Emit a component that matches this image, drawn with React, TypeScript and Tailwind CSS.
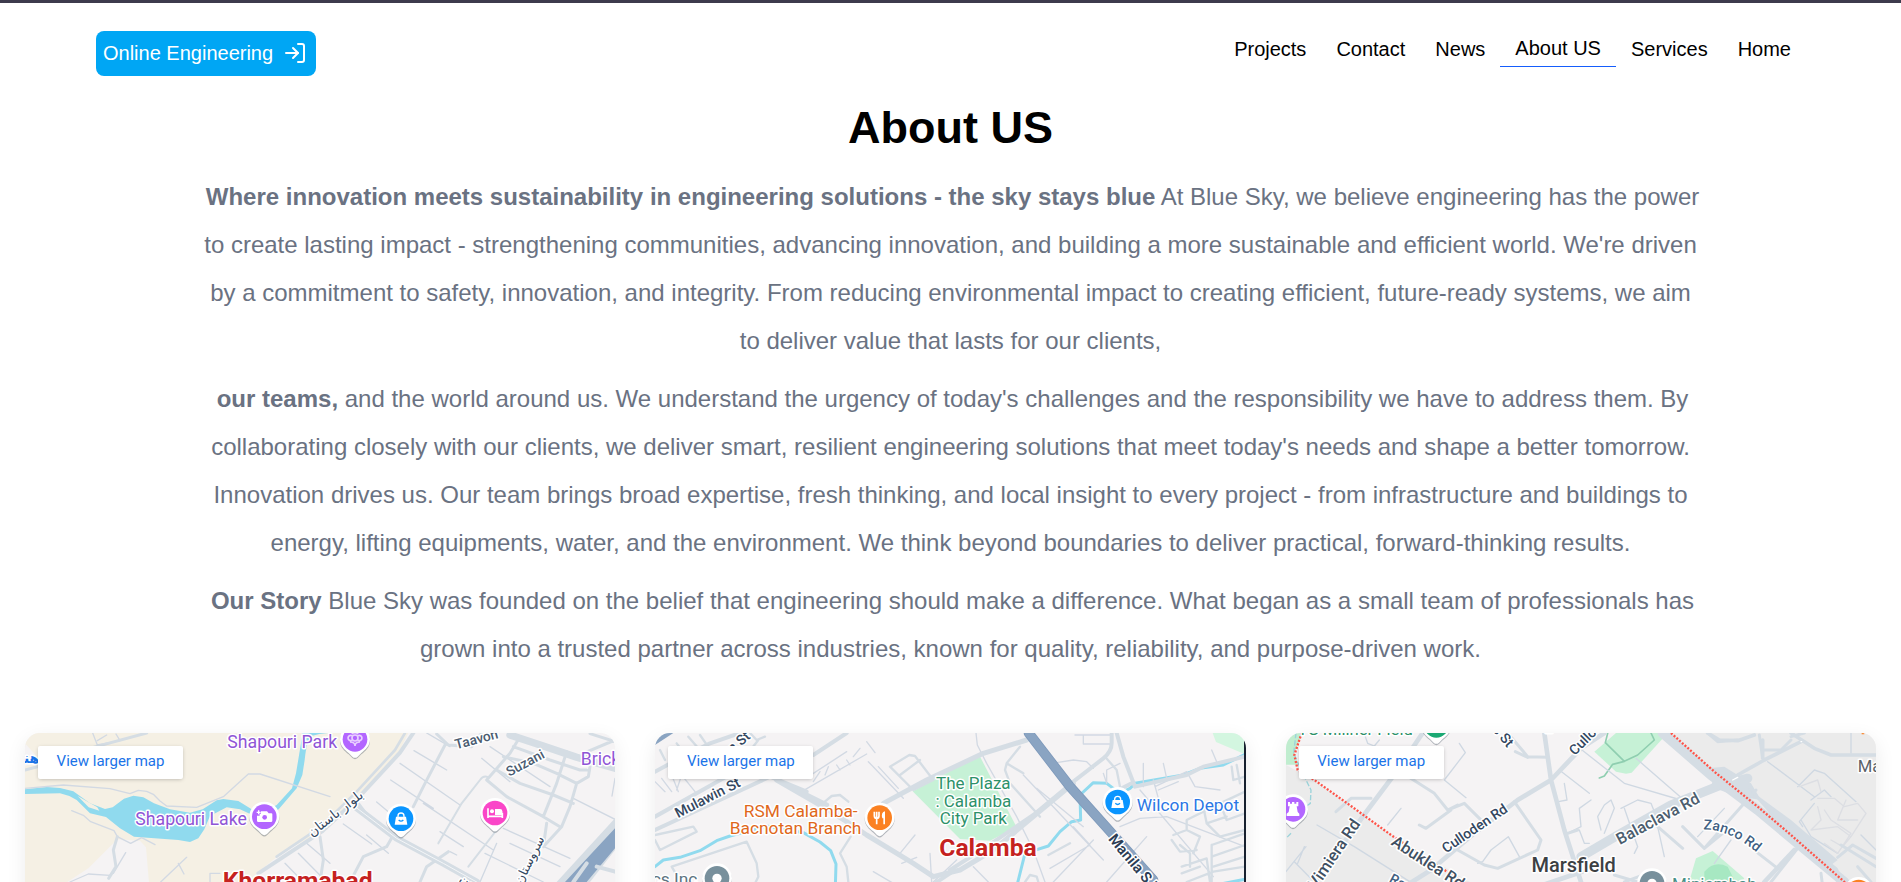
import type { ReactNode } from "react";
import { LogIn } from "lucide-react";

const navItems = ["Projects", "Contact", "News", "About US", "Services", "Home"];
const activeItem = "About US";

type RoadsProps = { d: string; w: number; c?: string; dash?: string };

function Roads({ d, w, c = "#d5dde4", dash }: RoadsProps) {
  return (
    <path
      d={d}
      fill="none"
      stroke={c}
      strokeWidth={w}
      strokeLinecap={dash ? "butt" : "round"}
      strokeLinejoin="round"
      strokeDasharray={dash}
    />
  );
}

type LabelProps = {
  x: number;
  y: number;
  size: number;
  color: string;
  angle?: number;
  weight?: number;
  anchor?: "start" | "middle" | "end";
  family?: string;
  children: ReactNode;
};

function Label({ x, y, size, color, angle = 0, weight = 400, anchor = "middle", family = "Roboto, sans-serif", children }: LabelProps) {
  return (
    <text
      transform={`translate(${x} ${y}) rotate(${angle})`}
      fontFamily={family}
      fontSize={size}
      fontWeight={weight}
      textAnchor={anchor}
      fill={color}
      stroke="#ffffff"
      strokeWidth={9}
      strokeLinejoin="round"
      paintOrder="stroke"
    >
      {children}
    </text>
  );
}

const glyphs = {
  camera: (
    <>
      <path d="M-10-16h18l5 6h8q3 0 3 3v19q0 4-4 4h-38q-4 0-4-4v-15h8v-6h4z" fill="#fff" />
      <circle cx="1" cy="2" r="7" fill="#b366ff" />
      <path d="M-17-19v12M-23-13h12" stroke="#fff" strokeWidth="4" />
    </>
  ),
  flower: (
    <g fill="none" stroke="#e9d0ff" strokeWidth="5">
      <circle cy="-4" r="9" />
      <path d="M-9-11a8 8 0 1 0 0 14M9-11a8 8 0 1 1 0 14M-15 8q15 0 15 12q0-12 15-12M-10-17q10-6 20 0" />
    </g>
  ),
  bag: (
    <>
      <path d="M-15-6h30l4 24h-38z" fill="#fff" />
      <path d="M-9-4v-4a9 9 0 0 1 18 0v4" fill="none" stroke="#fff" strokeWidth="4" />
      <path d="M-7 4q7 7 14 0" fill="none" stroke="#0a95ff" strokeWidth="4" />
    </>
  ),
  bed: (
    <>
      <path d="M-21-14v29M-21 10h43M22 15v-16" stroke="#fff" strokeWidth="5" />
      <circle cx="-9" cy="-5" r="6" fill="#fff" />
      <path d="M0-12h15q7 0 7 7v11H0z" fill="#fff" />
    </>
  ),
  food: (
    <>
      <path d="M-16-18v12q0 8 7 8t7-8v-12M-9-18V20" fill="none" stroke="#fff" strokeWidth="5" />
      <path d="M8 2q-5-18 8-21v39h-5V2z" fill="#fff" />
    </>
  ),
  dot: <circle r="14" fill="#fff" />,
  rook: (
    <path d="M-15-22h6v5h6v-5h7v5h6v-5h6v13h-5l3 17 5 5v7h-38v-7l6-5 3-17h-5z" fill="#fff" />
  ),
};

function Pin({ x, y, color, glyph }: { x: number; y: number; color: string; glyph: keyof typeof glyphs }) {
  const outline = "M-45 0a45 45 0 1 1 90 0c0 20-14 31-26 41l-11 11q-8 7-16 0l-11-11c-12-10-26-21-26-41z";
  return (
    <g transform={`translate(${x} ${y})`}>
      <path d={outline} transform="translate(0 4)" fill="#5f6b76" opacity="0.45" />
      <path d={outline} fill="#fff" />
      <circle r="37" fill={color} />
      {glyphs[glyph]}
    </g>
  );
}

function KhorramabadMap() {
  return (
    <>
      <path d="M45 39H1195L1170 90 1055 215 935 335 820 395 740 460 690 520 690 1400H45z" fill="#f5f0e4" />
      <path d="M150 500 235 445 322 358 390 362 408 382 418 500V1400H45V560z" fill="#f5f3f4" />
      <path d="M45 70 85 115 45 140z" fill="#f5f3f4" />
      <path
        d="M45 208 110 201 150 204 190 214 240 250 285 267 308 262 342 236 370 227 400 232 432 250 480 268 540 278 578 268 620 241 640 237 685 243 725 268 760 275 800 255 846 205 858 160 868 100 878 39H995Q940 36 905 48 890 60 884 120L877 165 860 205 806 268 760 300 690 268 650 262 600 288 583 328 565 355 540 366 505 360 372 350 330 325 288 291 240 280 200 240 178 228 150 220 45 222z"
        fill="#90daee"
      />
      <path d="M203 228 262 262 268 272 236 262z" fill="#f5f0e4" />
      <Roads w={4} c="#d2d9e3" d="M45 205 160 195 300 206 360 221 385 211 410 214 430 223 450 243 470 258 560 262 640 230 715 162H750L960 230M185 272 220 286 242 305 312 332 322 350 362 370 395 353 435 374M452 486 530 412M505 430 522 462M347 398 310 460M180 486 235 462 300 466M600 486V460H630M248 39 262 75 330 62 318 42M262 62 290 45" />
      <Roads w={9} d="M322 350 310 390 318 440 296 475M250 82 410 39M45 150 90 138" />
      <Roads w={4} c="#d0d8e2" d="M890 370 960 430M865 400 950 486M825 430 880 486M1000 312 1085 372M1070 345 1135 400M1142 180 1270 265M1170 130 1350 255M1212 92 1310 150M1100 246 1160 296M1240 250 1450 390M1250 39 1320 80M1440 80 1620 200M1415 115 1500 185M1480 325 1680 415M1500 370 1650 440M1425 400 1600 486M1690 235 1815 298M1815 175 1806 228M1290 335 1360 380M1320 395 1340 405M1410 486 1460 370" />
      <Roads w={9} d="M1305 75 1245 190 1210 260M1415 39 1385 80 1315 75 1280 42M1530 50 1500 100 1430 180 1490 230 1600 290 1650 320M1480 110 1570 130 1640 160 1700 190M1460 150 1530 190 1630 225 1690 250M1670 95 1640 190 1600 290M1740 140 1735 170 1700 190 1680 260 1655 320M1510 80 1620 120 1710 150 1730 150M1720 100 1815 60M1730 110 1815 150M1740 41 1815 65M1655 320 1600 380 1610 310M1045 250 1075 290M930 350 940 420 930 486M1020 486 1060 410 1130 380 1150 345M1230 486 1250 440 1315 395" />
      <Roads w={6} d="M1285 370 1355 250 1410 180Q1420 165 1435 172M1375 440 1460 330" />
      <Roads w={22} d="M1500 45 1600 78 1700 112 1815 145" />
      <Roads w={12} d="M1210 39 1170 98 1050 228 935 335 745 460" />
      <Roads w={8} d="M1185 39 1155 90 1040 215 930 322 800 410" />
      <Roads w={20} d="M1035 260 1160 355 1300 430 1400 486" />
      <Roads w={3} c="#f4f6f8" d="M1035 260 1160 355 1300 430 1400 486" />
      <path d="M1815 295 1640 486H1740L1815 390z" fill="#d5dde4" />
      <path d="M1815 325 1665 486 1500 700H1600L1730 486 1815 385z" fill="#8aa4c2" />
      <Roads w={12} d="M1760 440 1815 455M1730 430 1690 486" />
      <Label x={88} y={128} size={42} color="#1a73e8" weight={700} anchor="end" family="'DejaVu Sans', sans-serif">هنر</Label>
      <Label x={652} y={84} size={53} color="#8f55d6" anchor="start">Shapouri Park</Label>
      <Pin x={1035} y={58} color="#b366ff" glyph="flower" />
      <Label x={376} y={316} size={53} color="#8f55d6" anchor="start">Shapouri Lake</Label>
      <Pin x={763} y={290} color="#b366ff" glyph="camera" />
      <Pin x={1173} y={296} color="#0a95ff" glyph="bag" />
      <Pin x={1455} y={279} color="#fa46c8" glyph="bed" />
      <Label x={1403} y={71} size={41} angle={-15} color="#4a5b70" weight={500}>Taavon</Label>
      <Label x={1552} y={141} size={41} angle={-28} color="#4a5b70" weight={500}>Suzani</Label>
      <Label x={1712} y={135} size={53} color="#8f55d6" anchor="start">Brick</Label>
      <Label x={984} y={291} size={40} angle={-38} color="#33475f" family="'DejaVu Sans', sans-serif">بلوار باستان</Label>
      <Label x={1570} y={425} size={38} angle={-64} color="#33475f" family="'DejaVu Sans', sans-serif">سروستان</Label>
      <Label x={1364} y={492} size={40} angle={30} color="#33475f" family="'DejaVu Sans', sans-serif">بن</Label>
      <Label x={863} y={507} size={74} color="#c5221f" weight={700}>Khorramabad</Label>
    </>
  );
}

function CalambaMap() {
  return (
    <>
      <path d="M818 214 1018 106 1130 322 1050 362 960 357z" fill="#c6f1d6" />
      <path d="M1718 39H1815V103L1728 66z" fill="#d3f6e0" />
      <Roads w={9} c="#90daee" d="M45 440 70 420 120 412 180 392 230 362 270 348 380 318 490 338 540 366 572 392 588 432 586 500M1130 500 1155 400 1225 378 1260 335 1295 305 1322 300 1320 225 1360 188 1400 190 1440 220 1470 205 1485 190 1630 165 1680 145 1750 135 1815 103M1700 500 1815 478" />
      <Roads w={4} c="#d2d9e3" d="M685 125 790 235M715 140 775 205M490 212 680 102M680 65 705 98M505 170 620 95M540 155 520 185M565 140 555 165M590 135 600 150M620 120 630 135M660 85 640 110M45 185 75 215M65 175 95 215M95 165 115 215M110 210 125 165 165 215M1008 39 1012 75 1040 130 1130 290 1180 390 1215 486M1305 45H1330V72H1410M1410 45H1330M1250 128 1300 120 1340 125 1360 145M1150 165 1390 420M1190 205 1330 320M1400 486 1520 350M1230 445 1350 375 1300 320M1240 486 1360 360M1500 210 1720 470M1440 320 1500 295 1580 290 1815 380M1555 235 1540 180M1510 200 1510 130M1580 175 1570 130M1640 155 1545 200M1555 210 1615 185M1715 90 1730 125M1640 155 1665 200 1740 210M700 455 760 490M780 400 825 345M785 430 830 412M870 400 875 486M950 420 880 486M1000 440 1045 486M1390 160 1400 190 1400 150 1440 130" />
      <Roads w={7} d="M750 140 808 105 825 108 880 180 820 210 750 140M780 165 840 120M60 90 75 120M110 70 140 110M145 50 175 85M180 45 225 110M330 39 350 60 375 50M355 60 320 105M45 345 160 320 170 335 60 390 45 360M95 440 320 365 350 430 355 470 340 500M95 440 130 500M548 250 575 228 600 225 625 245M632 350 600 400 620 440 625 486M1150 160 1100 130 1095 150 1110 190 1200 290M1100 130 1140 80M1395 110 1430 150 1440 200M1155 486 1170 465 1190 470 1195 486M1225 405 1290 370M1600 345 1640 330 1680 350 1660 400M1595 360 1620 395 1670 390M1640 330 1640 300 1740 250 1815 215M1690 260 1700 310 1760 290M1740 250 1760 300 1815 280M1700 310 1740 350 1815 330M1715 375V440 486M1715 375 1815 340M1715 410 1815 375M1720 440 1815 410M1625 440 1700 415 1710 486M1625 460 1680 440M1775 140 1780 180 1815 170M1790 135 1800 190M1640 486 1720 455 1815 440M1620 375 1650 400 1650 440" />
      <Roads w={12} d="M45 290 330 130M45 330 390 170M520 105 620 39M45 155 110 120 210 70 300 39M390 170 500 215M1415 39V70Q1415 95 1390 115L1300 185 1180 285 1040 380 930 450" />
      <Roads w={15} d="M410 180 540 255 620 305 680 345 820 430 880 470 960 450 1060 390 1180 290 1300 190M730 250 860 180 1030 100 1160 60M480 215 560 255" />
      <Roads w={12} d="M1430 39 1450 110 1485 200 1640 165 1690 140 1815 110" />
      <Roads w={12} d="M1475 190 1435 210M930 460 870 500" />
      <path d="M45 39H100L45 75z" fill="#8aa4c2" />
      <Roads w={30} c="#7f9abb" d="M1166 39 1290 200 1420 345 1540 480" />
      <Roads w={25} c="#8aa4c2" d="M1166 39 1290 200 1420 345 1540 480" />
      <Label x={305} y={77} size={42} angle={-40} color="#33475f" weight={500}>n St</Label>
      <Label x={209} y={246} size={43} angle={-27} color="#33475f" weight={500}>Mulawin St</Label>
      <Label x={653} y={290} size={52} color="#e0681b" anchor="end">RSM Calamba-</Label>
      <Label x={664} y={343} size={52} color="#e0681b" anchor="end">Bacnotan Branch</Label>
      <Pin x={719} y={293} color="#fb8122" glyph="food" />
      <Label x={1000} y={208} size={51} color="#2d9169">The Plaza</Label>
      <Label x={1000} y={261} size={51} color="#2d9169">: Calamba</Label>
      <Label x={1000} y={313} size={51} color="#2d9169">City Park</Label>
      <Label x={1044} y={408} size={74} color="#c5221f" weight={700}>Calamba</Label>
      <Pin x={1433} y={246} color="#0a95ff" glyph="bag" />
      <Label x={1490} y={273} size={52} color="#2b77e5" anchor="start">Wilcon Depot</Label>
      <Label x={1403} y={358} size={45} angle={50} color="#2c3d55" weight={600} anchor="start">Manila S Rd</Label>
      <Label x={172} y={496} size={52} color="#5d7480" anchor="end">cs Inc</Label>
      <Pin x={231} y={475} color="#78909c" glyph="dot" />
      <rect x={1812} y={39} width={6} height={1400} fill="#17202e" />
    </>
  );
}

function MarsfieldMap() {
  return (
    <>
      <path d="M45 135 130 180 360 345 620 500V1400H45z" fill="#ebebeb" />
      <path d="M1190 39H1820V600L1740 500z" fill="#ebebeb" />
      <path d="M45 39H95L70 100 80 134H45z" fill="#c0edcf" />
      <path d="M1035 39H1190L1082 158 1065 161 1035 155 970 95z" fill="#c6f1d6" />
      <path d="M1250 500 1275 415 1325 393 1420 475 1400 500z" fill="#c6f1d6" />
      <path d="M1300 500V455Q1330 420 1370 440L1400 500z" fill="#a7e8c2" />
      <Roads w={5} c="#8fceb0" d="M1010 40 1003 68 1060 124 1100 105 1150 60 1140 39M1060 124 1025 133 1000 168 985 174" />
      <Roads w={4} c="#9bd3da" dash="16 6" d="M75 39 68 100 95 160 120 210 118 250 90 270M60 340 45 355" />
      <Roads w={4} c="#cfd8e2" d="M138 315 250 380 440 500M80 430 100 380M45 455 105 380M70 425 130 486M283 50 290 70 310 78 325 60M565 70 583 98 520 180 585 233M390 265 350 315M865 150 955 220M880 190 888 240 862 245M960 240 925 265 930 320 890 340M925 330 940 370 955 370M635 425 660 390 712 350 745 410M635 425 620 430M933 90 1060 190 1230 240M1095 115 1250 250M990 330 980 290 1000 255 1020 240 1030 265 1000 340M1050 265 1100 240 1140 250 1160 300M1060 265 1100 380 1090 400M1360 265 1280 350M1380 360 1330 430M1160 320 1180 410M1740 39V100M1490 125 1630 230M1580 200 1630 150 1660 160 1755 245M1590 300 1620 350 1700 400M1630 250 1585 305 1595 320M1770 345 1815 390M1620 240 1660 210 1680 230" />
      <Roads w={4} c="#dcdee3" d="M1640 235H1690M1690 235 1720 260 1760 250 1785 280 1740 350 1700 320 1620 330 1650 300 1640 260M1660 270 1680 300 1740 340 1700 400 1660 370M1725 240 1700 300 1760 300M1740 350 1715 380 1680 360M1585 200 1640 180 1650 215" />
      <Roads w={9} d="M412 170 490 220 530 270 580 250 635 305M530 270 560 255M445 315 465 325 540 270M730 245 810 360 800 390 680 445 640 435 560 390M195 275 240 235 300 235M710 39 770 110 830 112M733 95 770 112M1235 320 1300 385 1455 210M1160 320 1235 385M1455 395 1520 445M1300 385 1355 340M1580 385 1500 486M1710 375 1815 440M1700 412 1745 375 1815 415M1760 440 1800 486M1030 465 1100 486M1060 486 1130 460M890 340 920 330M1650 460 1655 500M1310 39 1340 65 1400 60M1465 45 1475 115M1560 50 1600 39M1480 90 1530 90 1560 60" />
      <Roads w={14} d="M455 39 380 150 290 270 180 420 120 500M820 39 840 180 880 330 930 486M840 180 930 85 1000 39M840 180 740 240 610 340 480 450 400 500M933 455 800 500M1570 390 1480 486" />
      <Roads w={11} d="M1310 39 1345 60 1400 62 1450 45M1590 65 1480 120 1400 165M1560 39 1630 85 1680 105H1815M1475 60V115" />
      <Roads w={28} d="M930 410 1050 340 1200 255 1350 195 1430 175" />
      <Roads w={30} d="M1175 39 1320 165 1460 270 1720 486" />
      <path d="M1310 145 1330 165 1320 200 1395 228 1470 240 1440 190 1360 140z" fill="#d5dde4" />
      <path d="M1430 205 1560 300 1700 420 1660 450 1530 320z" fill="#d5dde4" />
      <Roads w={22} d="M1570 355 1690 450 1710 490" />
      <Roads w={4} c="#ffffff" d="M1385 180 1400 172M1590 65h2" />
      <Roads w={7} c="#ff5348" dash="6 5" d="M1200 39 1330 155 1460 260 1560 345 1725 490M92 39 70 105 80 150 130 180 240 258 360 345 520 450 600 500" />
      <Label x={80} y={45} size={50} color="#2d9169" anchor="start">TG Millner Field</Label>
      <Pin x={496} y={16} color="#1aa873" glyph="dot" />
      <Pin x={66} y={268} color="#b366ff" glyph="rook" />
      <Label x={686} y={57} size={42} angle={50} color="#33475f" weight={500}>s St</Label>
      <Label x={833} y={40} size={44} color="#33475f" weight={500}>E</Label>
      <Label x={911} y={108} size={42} angle={-45} color="#33475f" weight={500} anchor="start">Culloden</Label>
      <Label x={619} y={337} size={42} angle={-34} color="#33475f" weight={500}>Culloden Rd</Label>
      <Label x={136} y={510} size={49} angle={-56} color="#3f5062" weight={500} anchor="start">Vimiera Rd</Label>
      <Label x={358} y={373} size={49} angle={33} color="#3f5062" weight={500} anchor="start">Abuklea Rd</Label>
      <Label x={352} y={485} size={42} angle={28} color="#3f5f82" weight={500} anchor="start">Raymond</Label>
      <Label x={1168} y={310} size={48} angle={-28} color="#4b5d6e" weight={500}>Balaclava Rd</Label>
      <path id="zanco-road" d="M1297 328Q1375 328 1460 400" fill="none" />
      <Label x={0} y={0} size={42} color="#3f5f82" weight={500} anchor="start">
        <textPath href="#zanco-road">Zanco Rd</textPath>
      </Label>
      <Label x={908} y={456} size={60} color="#3c4043" weight={500}>Marsfield</Label>
      <Label x={1760} y={155} size={50} color="#5a6268" anchor="start">Macquarie</Label>
      <Label x={1203} y={510} size={51} color="#4a8f86" anchor="start">Miniembah</Label>
      <Pin x={1143} y={490} color="#78909c" glyph="dot" />
      <path d="M1772 39h8v4h-8z" fill="#fb8122" />
      <Pin x={1763} y={516} color="#fb8122" glyph="food" />
    </>
  );
}

function MapCard({ title, href, children }: { title: string; href: string; children: ReactNode }) {
  return (
    <article className="relative overflow-hidden rounded-[15px] bg-[#f5f3f4] shadow-[0_6px_20px_rgba(0,0,0,0.08)]">
      <svg
        viewBox="45 39 1771 1350"
        preserveAspectRatio="xMinYMin slice"
        role="img"
        aria-label={title}
        className="block h-[450px] w-full"
      >
        {children}
      </svg>
      <a
        href={href}
        className="absolute top-[13px] left-[13px] flex h-[33px] w-[145px] items-center justify-center rounded-xs bg-white pb-0.5 font-[Roboto,sans-serif] text-[15px] text-[#1a73e8] shadow-[0_1px_4px_-1px_rgba(0,0,0,0.3)]"
      >
        View larger map
      </a>
    </article>
  );
}

export default function App() {
  return (
    <div className="h-screen overflow-y-auto border-t-[3px] border-[#3d3b4d] bg-white font-['Liberation_Sans',Arial,sans-serif] [scrollbar-width:none]">
      <header className="flex items-start justify-between pt-7 pr-[95px] pl-24">
        <button
          type="button"
          className="flex h-[45px] items-center gap-2.5 rounded-lg bg-sky-500 pr-[9px] pb-0.5 pl-[7px] text-xl text-white"
        >
          Online Engineering
          <LogIn size={24} aria-hidden="true" />
        </button>
        <nav aria-label="Main">
          <ul className="flex items-end text-xl text-black">
            {navItems.map((item) => (
              <li key={item}>
                <a
                  href={`#${item.toLowerCase().replace(" ", "-")}`}
                  aria-current={item === activeItem ? "page" : undefined}
                  className={
                    item === activeItem
                      ? "block border-b border-blue-600 px-[15px] pt-[3px] pb-1"
                      : "block px-[15px] pt-[3px] pb-1"
                  }
                >
                  {item}
                </a>
              </li>
            ))}
          </ul>
        </nav>
      </header>

      <main>
        <section className="mx-[200px] mt-[27px] text-center">
          <h1 className="text-[45px] leading-[50px] font-bold text-black">About US</h1>
          <div className="mt-5 flex flex-col gap-2.5 text-2xl leading-[48px] text-gray-500">
            <p>
              <strong className="pl-1">
                Where innovation meets sustainability in engineering solutions - the sky stays blue
              </strong>{" "}
              At Blue Sky, we believe engineering has the power to create lasting impact - strengthening communities,
              advancing innovation, and building a more sustainable and efficient world. We're driven by a commitment to
              safety, innovation, and integrity. From reducing environmental impact to creating efficient, future-ready
              systems, we aim to deliver value that lasts for our clients,
            </p>
            <p>
              <strong className="pl-1">our teams,</strong> and the world around us. We understand the urgency of today's
              challenges and the responsibility we have to address them. By collaborating closely with our clients, we
              deliver smart, resilient engineering solutions that meet today's needs and shape a better tomorrow.
              Innovation drives us. Our team brings broad expertise, fresh thinking, and local insight to every project -
              from infrastructure and buildings to energy, lifting equipments, water, and the environment. We think
              beyond boundaries to deliver practical, forward-thinking results.
            </p>
            <p>
              <strong className="pl-1">Our Story</strong> Blue Sky was founded on the belief that engineering should
              make a difference. What began as a small team of professionals has grown into a trusted partner across
              industries, known for quality, reliability, and purpose-driven work.
            </p>
          </div>
        </section>

        <section aria-label="Locations" className="mt-[60px] grid grid-cols-3 gap-10 px-[25px] pb-10">
          <MapCard title="Map of Khorramabad" href="#khorramabad">
            <KhorramabadMap />
          </MapCard>
          <MapCard title="Map of Calamba" href="#calamba">
            <CalambaMap />
          </MapCard>
          <MapCard title="Map of Marsfield" href="#marsfield">
            <MarsfieldMap />
          </MapCard>
        </section>
      </main>
    </div>
  );
}
